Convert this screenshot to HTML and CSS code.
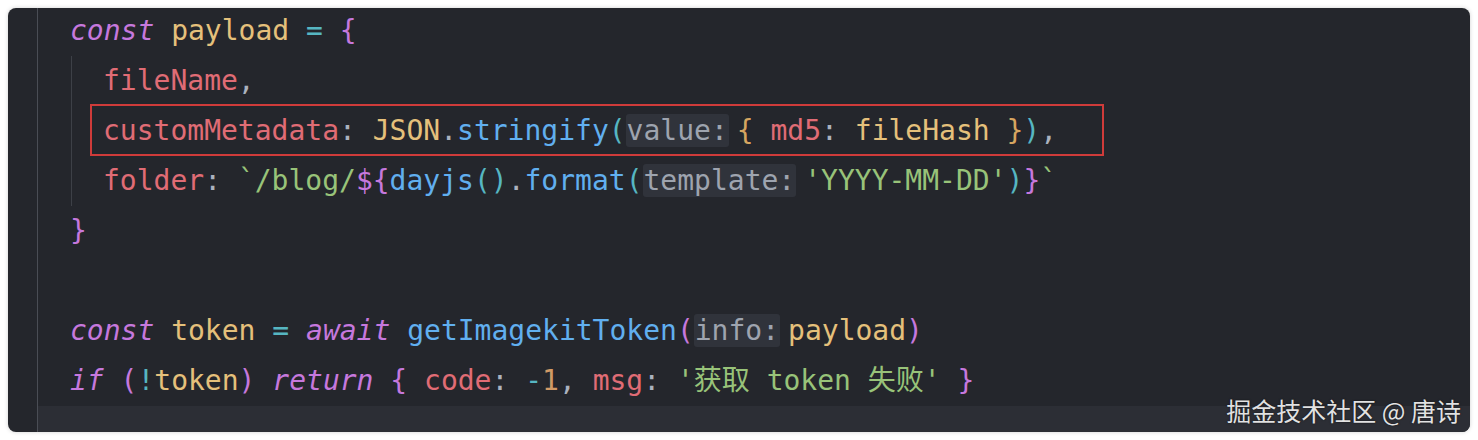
FILE: index.html
```html
<!DOCTYPE html>
<html lang="zh">
<head>
<meta charset="utf-8">
<title>code</title>
<link rel="stylesheet" href="styles.css">
</head>
<body>
<div class="card">
  <div class="editor">
    <div class="line"><span class="kw">const</span> <span class="var">payload</span> <span class="op">=</span> <span class="kw-b">{</span></div>
    <div class="block">
      <div class="line"><span class="prop">fileName</span><span class="pn">,</span></div>
      <div class="line"><span class="prop">customMetadata</span><span class="pn">:</span> <span class="var">JSON</span><span class="pn">.</span><span class="fn">stringify</span><span class="op">(</span><span class="hint">value:</span><span class="gold">{</span> <span class="prop">md5</span><span class="pn">:</span> <span class="var">fileHash</span> <span class="gold">}</span><span class="op">)</span><span class="pn">,</span></div>
      <div class="line"><span class="prop">folder</span><span class="pn">:</span> <span class="str">`/blog/</span><span class="kw-b">${</span><span class="fn">dayjs</span><span class="op">()</span><span class="pn">.</span><span class="fn">format</span><span class="op">(</span><span class="hint">template:</span><span class="str">'YYYY-MM-DD'</span><span class="op">)</span><span class="kw-b">}</span><span class="str">`</span></div>
    </div>
    <div class="line"><span class="kw-b">}</span></div>
    <div class="line"></div>
    <div class="line"><span class="kw">const</span> <span class="var">token</span> <span class="op">=</span> <span class="kw">await</span> <span class="fn">getImagekitToken</span><span class="kw-b">(</span><span class="hint">info:</span><span class="var">payload</span><span class="kw-b">)</span></div>
    <div class="line"><span class="kw">if</span> <span class="kw-b">(</span><span class="op">!</span><span class="var">token</span><span class="kw-b">)</span> <span class="kw">return</span> <span class="kw-b">{</span> <span class="prop">code</span><span class="pn">:</span> <span class="op">-</span><span class="num">1</span><span class="pn">,</span> <span class="prop">msg</span><span class="pn">:</span> <span class="str">'获取 token 失败'</span> <span class="kw-b">}</span></div>
    <div class="line current"></div>
  </div>
  <div class="highlight-box"></div>
  <div class="watermark">掘金技术社区 @ 唐诗</div>
</div>
</body>
</html>
```
FILE: styles.css
```css
html, body {
  margin: 0;
  padding: 0;
  background: #ffffff;
}

.card {
  position: relative;
  margin: 8px;
  width: 1462px;
  height: 424px;
  background: #24262c;
  border-radius: 8px;
  overflow: hidden;
  box-shadow: 0 0 4px rgba(0, 0, 0, 0.18);
}

.editor {
  margin-left: 29px;
  margin-top: -2px;
  border-left: 1px solid #4a4d55;
  display: flex;
  flex-direction: column;
  font-family: "DejaVu Sans Mono", "Noto Sans CJK SC", monospace;
  font-size: 28px;
  color: #abb2bf;
}

.line {
  height: 50px;
  line-height: 50px;
  padding-left: 32px;
  white-space: pre;
}

.block {
  margin-left: 33px;
  border-left: 1px solid #3d4047;
  display: flex;
  flex-direction: column;
}

.block .line {
  padding-left: 31px;
}

.current {
  background: #2c2e35;
}

.kw {
  color: #c678dd;
  font-style: italic;
}

.kw-b { color: #c678dd; }
.var { color: #e5c07b; }
.op { color: #56b6c2; }
.prop { color: #e06c75; }
.pn { color: #abb2bf; }
.fn { color: #61afef; }
.str { color: #98c379; }
.num { color: #d19a66; }
.gold { color: #d6a560; }

.hint {
  background: #30333b;
  color: #9ea4af;
  border-radius: 3px;
  padding: 0 1px;
  margin-right: 8px;
}

.highlight-box {
  position: absolute;
  left: 82px;
  top: 96px;
  width: 1010px;
  height: 48px;
  border: 2px solid #cf3b3a;
}

.watermark {
  position: absolute;
  right: 9px;
  bottom: 7px;
  font-family: "Noto Sans CJK SC", "Noto Sans", sans-serif;
  font-size: 25px;
  line-height: 30px;
  color: rgba(255, 255, 255, 0.88);
  text-shadow: 0 0 2px rgba(0, 0, 0, 0.6);
}
```
